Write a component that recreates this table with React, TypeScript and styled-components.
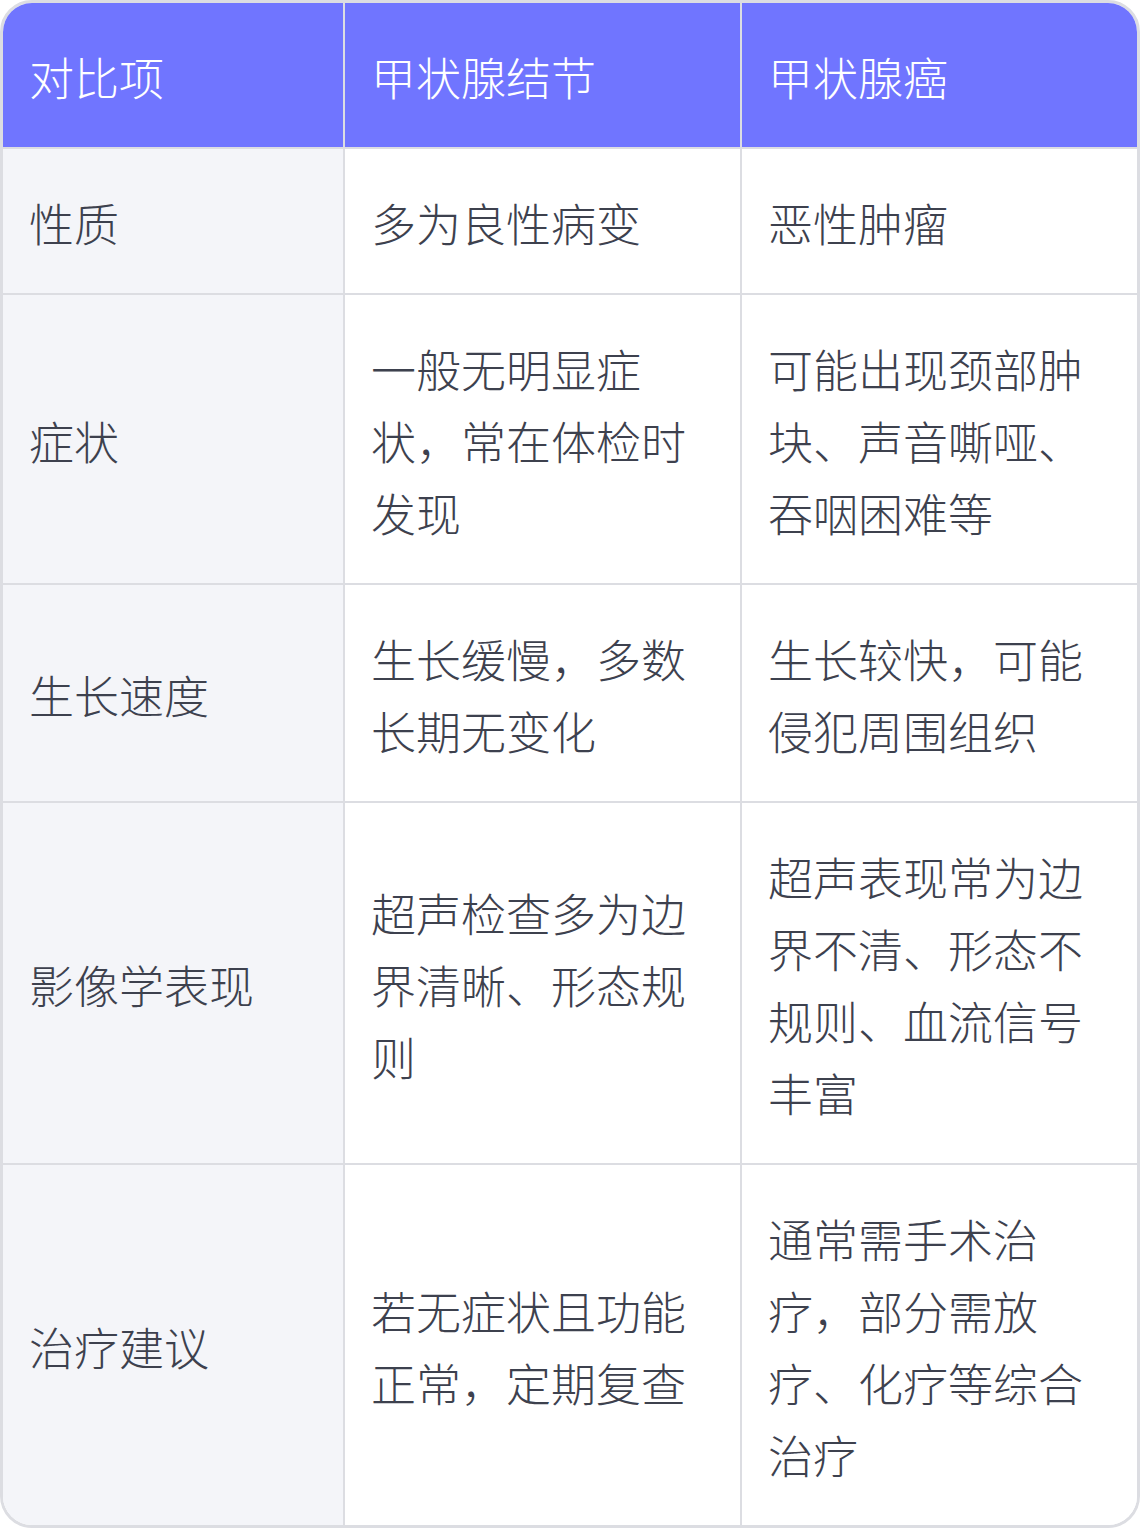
import React from 'react';
import styled, { createGlobalStyle } from 'styled-components';

const GlobalStyle = createGlobalStyle`
    html, body {
        margin: 0;
        padding: 0;
        background: #ffffff;
    }

    body {
        font-family: "Noto Sans CJK SC", "Noto Sans", sans-serif;
    }
`;

const Frame = styled.div`
    width: 1140px;
    box-sizing: border-box;
    border: 3px solid #dcdde2;
    border-radius: 32px;
    overflow: hidden;
    background: #ffffff;
`;

const Table = styled.table`
    width: 100%;
    border-collapse: separate;
    border-spacing: 0;
    table-layout: fixed;
`;

const HeadCell = styled.th`
    background: #7075ff;
    color: #ffffff;
    font-weight: 300;
    text-align: left;
`;

const Cell = styled.td<{ $label?: boolean }>`
    background: ${p => (p.$label ? '#f4f5f9' : '#ffffff')};
    color: #3d414e;
    font-weight: 300;
`;

const Row = styled.tr<{ $last?: boolean }>`
    > th, > td {
        box-sizing: border-box;
        padding: 38px 26px 34px 26px;
        font-size: 45px;
        line-height: 72px;
        vertical-align: middle;
        border-right: 2px solid #dcdde2;
        border-bottom: ${p => (p.$last ? 'none' : '2px solid #dcdde2')};
    }

    > :last-child {
        border-right: none;
    }
`;

interface Item {
    label: string;
    nodule: string;
    cancer: string;
}

const items: Item[] = [
    { label: '性质', nodule: '多为良性病变', cancer: '恶性肿瘤' },
    { label: '症状', nodule: '一般无明显症状，常在体检时发现', cancer: '可能出现颈部肿块、声音嘶哑、吞咽困难等' },
    { label: '生长速度', nodule: '生长缓慢，多数长期无变化', cancer: '生长较快，可能侵犯周围组织' },
    { label: '影像学表现', nodule: '超声检查多为边界清晰、形态规则', cancer: '超声表现常为边界不清、形态不规则、血流信号丰富' },
    { label: '治疗建议', nodule: '若无症状且功能正常，定期复查', cancer: '通常需手术治疗，部分需放疗、化疗等综合治疗' },
];

export default function App() {
    return (
        <>
            <GlobalStyle />
            <Frame>
                <Table>
                    <colgroup>
                        <col style={{ width: 342 }} />
                        <col style={{ width: 397 }} />
                        <col />
                    </colgroup>
                    <thead>
                        <Row>
                            <HeadCell>对比项</HeadCell>
                            <HeadCell>甲状腺结节</HeadCell>
                            <HeadCell>甲状腺癌</HeadCell>
                        </Row>
                    </thead>
                    <tbody>
                        {items.map((item, i) => (
                            <Row key={item.label} $last={i === items.length - 1}>
                                <Cell $label>{item.label}</Cell>
                                <Cell>{item.nodule}</Cell>
                                <Cell>{item.cancer}</Cell>
                            </Row>
                        ))}
                    </tbody>
                </Table>
            </Frame>
        </>
    );
}
